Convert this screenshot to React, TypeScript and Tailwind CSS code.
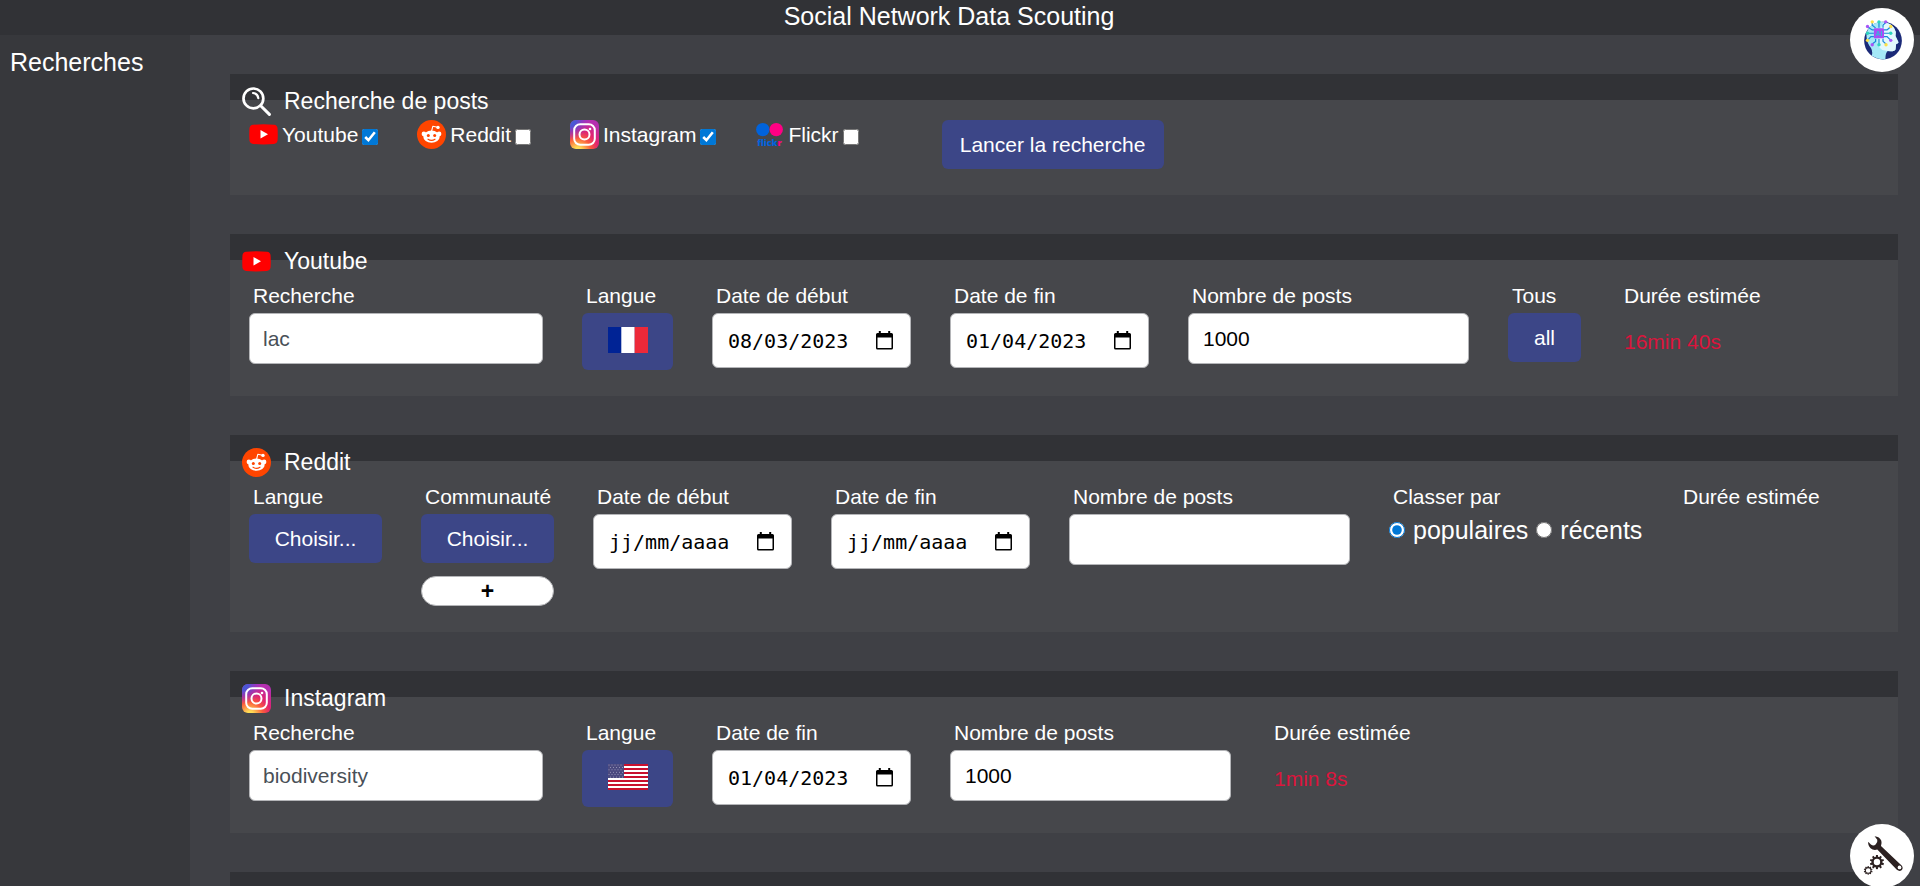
import { useId, type ReactNode } from "react";

const fieldBox = "rounded-md border border-[#b4b5b8] bg-white";
const blueButton =
  "flex h-[49px] cursor-pointer items-center justify-center rounded-md bg-[#3c4687] text-[21px] text-white hover:bg-[#47529b]";

function YoutubeIcon() {
  return (
    <svg viewBox="0 0 29 29" className="size-[29px] shrink-0" aria-hidden="true">
      <path fill="#f00" d="M4 4.7Q14.500 4 25 4.700Q28 5 28.500 8Q29 14.500 28.500 21Q28 23.600 25 24Q14.500 24.800 4 24Q1 23.600 .5 21Q0 14.500 .5 8Q1 5 4 4.700Z" />
      <path fill="#fff" d="M11.500 10v8.600l7.500-4.300Z" />
    </svg>
  );
}

function RedditIcon() {
  return (
    <svg viewBox="0 0 29 29" className="size-[29px] shrink-0" aria-hidden="true">
      <circle cx="14.500" cy="14.500" r="14.500" fill="#ff4500" />
      <path d="M14.500 11.500 15.800 6.300 20.500 7.300" fill="none" stroke="#fff" strokeWidth="1.100" strokeLinejoin="round" />
      <circle cx="21" cy="7.400" r="1.700" fill="#fff" />
      <circle cx="6.900" cy="13.900" r="2.300" fill="#fff" />
      <circle cx="22.100" cy="13.900" r="2.300" fill="#fff" />
      <ellipse cx="14.500" cy="16.700" rx="8.200" ry="6.100" fill="#fff" />
      <circle cx="11.300" cy="15.400" r="1.500" fill="#ff4500" />
      <circle cx="17.700" cy="15.400" r="1.500" fill="#ff4500" />
      <path d="M11 19.200Q14.500 21.500 18 19.200" fill="none" stroke="#ff4500" strokeWidth="1.100" strokeLinecap="round" />
    </svg>
  );
}

function InstagramIcon() {
  const id = useId();
  return (
    <svg viewBox="0 0 29 29" className="size-[29px] shrink-0" aria-hidden="true">
      <defs>
        <radialGradient id={`${id}a`} cx="0.270" cy="1.080" r="1.100">
          <stop offset="0" stopColor="#fd5" />
          <stop offset="0.120" stopColor="#fd5" />
          <stop offset="0.420" stopColor="#fb5a3c" />
          <stop offset="0.650" stopColor="#e1246f" />
          <stop offset="1" stopColor="#b52fb0" />
        </radialGradient>
        <radialGradient id={`${id}b`} cx="0" cy="0" r="0.700">
          <stop offset="0" stopColor="#3d63d8" />
          <stop offset="0.300" stopColor="#4d55d4" />
          <stop offset="1" stopColor="#8a30e0" stopOpacity="0" />
        </radialGradient>
      </defs>
      <rect width="29" height="29" rx="6" fill={`url(#${id}a)`} />
      <rect width="29" height="29" rx="6" fill={`url(#${id}b)`} />
      <rect x="4.200" y="4.200" width="20.600" height="20.600" rx="6" fill="none" stroke="#fff" strokeWidth="2" />
      <circle cx="14.500" cy="14.500" r="5" fill="none" stroke="#fff" strokeWidth="2" />
      <circle cx="20" cy="9" r="1.300" fill="#fff" />
    </svg>
  );
}

function FlickrIcon() {
  return (
    <svg viewBox="0 0 29 29" className="size-[29px] shrink-0" aria-hidden="true">
      <circle cx="7.800" cy="9.600" r="6.700" fill="#0063dc" />
      <circle cx="21.200" cy="9.600" r="6.700" fill="#ff0084" />
      <text x="14.500" y="26" textAnchor="middle" fontFamily="Open Sans, sans-serif" fontWeight="800" fontSize="9" fill="#0063dc">
        flick<tspan fill="#ff0084">r</tspan>
      </text>
    </svg>
  );
}

function SearchIcon() {
  return (
    <svg viewBox="0 0 29 29" className="size-[29px] shrink-0" aria-hidden="true" fill="none" stroke="#fff" strokeLinecap="round">
      <circle cx="11.400" cy="11.400" r="9.900" strokeWidth="2.700" />
      <path d="M18.700 18.700 27.400 27.400" strokeWidth="3" />
      <path d="M11 6Q15.800 6.500 16.300 11.200" strokeWidth="2.200" />
    </svg>
  );
}

function CalendarIcon() {
  return (
    <svg viewBox="0 0 17 19" className="h-[19px] w-[17px]" aria-hidden="true" fill="#000">
      <path fillRule="evenodd" d="M2.800 0h2v2h7.400V0h2v2H15.500Q17 2 17 3.500V17Q17 18.500 15.500 18.500H1.500Q0 18.500 0 17V3.500Q0 2 1.500 2H2.800ZM1.500 6.500V17H15.500V6.500Z" />
    </svg>
  );
}

function FranceFlag() {
  return (
    <svg viewBox="0 0 40 26" className="h-[26px] w-10" role="img" aria-label="Français">
      <rect width="14" height="26" fill="#002395" />
      <rect x="13.300" width="13.400" height="26" fill="#fff" />
      <rect x="26.700" width="13.300" height="26" fill="#ed2939" />
    </svg>
  );
}

function UsaFlag() {
  return (
    <svg viewBox="0 0 40 26" className="h-[26px] w-10" role="img" aria-label="English">
      <rect width="40" height="26" fill="#fff" />
      {[0, 4, 8, 12, 16, 20, 24].map((y) => (
        <rect key={y} y={y} width="40" height="2" fill="#c8102e" />
      ))}
      <rect width="16" height="14" fill="#4b4a80" />
      {[1, 3.400, 5.800, 8.200, 10.600, 13].map((y, row) =>
        [1, 4, 7, 10, 13].map((x) => <circle key={`${x}-${y}`} cx={x + (row % 2) * 1.500} cy={y} r="0.500" fill="#a9a8c4" />),
      )}
    </svg>
  );
}

function BrainIcon() {
  const dots: [number, number, string][] = [
    [276, 66, "#fde047"], [296, 66, "#2dd4bf"], [316, 66, "#a855f7"], [262, 80, "#a855f7"], [331, 80, "#fde047"],
    [262, 100, "#2dd4bf"], [331, 100, "#2dd4bf"], [262, 121, "#fde047"], [331, 121, "#a855f7"],
    [276, 134, "#a855f7"], [296, 134, "#2dd4bf"], [317, 134, "#fde047"],
  ];
  return (
    <svg viewBox="210 25 190 190" className="size-16" aria-hidden="true">
      <circle cx="308" cy="122" r="56" fill="#1b2a78" />
      <path fill="#a5e8f7" d="M260 96Q270 70 300 66Q338 66 346 96L345 108L354 127Q354 131 347 132L345 148Q343 155 322 153Q315 158 315 178Q290 178 275 167Q279 150 268 138Q256 118 260 96Z" />
      <path fill="#e3f8fd" d="M308 68Q340 70 346 96L345 108L354 127Q354 131 347 132L345 148Q343 155 322 153L306 150Q290 140 292 118Z" />
      <g stroke="#1687d9" strokeWidth="3.500" fill="none">
        <path d="M276 68V76L286 84M296 68V84M316 68L308 76V84M264 82L276 90H281M264 100H281M264 119L272 110H281M276 132L286 124V116M296 132V116M317 132L308 124V116M329 82L320 90H311M329 100H311M329 119L320 110H311" />
      </g>
      <rect x="281" y="85" width="30" height="30" rx="2" fill="#a94df5" />
      <text x="296" y="107" textAnchor="middle" fontFamily="Liberation Sans, sans-serif" fontWeight="700" fontSize="20" fill="#35b6dd">AI</text>
      {dots.map(([x, y, fill]) => (
        <circle key={`${x}-${y}`} cx={x} cy={y} r="5" fill={fill} />
      ))}
    </svg>
  );
}

function ToolsIcon() {
  const teeth = [0, 36, 72, 108, 144, 180, 216, 252, 288, 324];
  return (
    <svg viewBox="210 131 190 190" className="size-16" aria-hidden="true">
      <path
        fill="#2b2020"
        d="M283 167Q298 168 303 181Q305 188 302 196L364 255Q369 263 363 268Q357 273 349 267L291 207Q279 210 271 203Q263 196 264 184L272 192Q280 197 286 192Q293 186 291 178Z"
      />
      <circle cx="357" cy="260" r="5.500" fill="#fff" />
      <g stroke="#2b2020" fill="none">
        <circle cx="290" cy="244" r="13" strokeWidth="7" />
        {teeth.map((a) => (
          <path key={a} d="M290 230V223" strokeWidth="6" transform={`rotate(${a} 290 244)`} />
        ))}
        <circle cx="264" cy="269" r="8.500" strokeWidth="3" />
        {teeth.map((a) => (
          <path key={a} d="M264 260V256" strokeWidth="3.500" transform={`rotate(${a} 264 269)`} />
        ))}
      </g>
    </svg>
  );
}

function Panel({ icon, title, children }: { icon?: ReactNode; title?: string; children?: ReactNode }) {
  return (
    <section className="border-t-[26px] border-[#313236] bg-[#46474b] pb-[26px]">
      <h2 className="-mt-[18px] flex h-[38px] items-center gap-[13px] pl-3 text-[23px] text-white">
        {icon}
        {title}
      </h2>
      <div className="flex flex-wrap items-start gap-x-[39px] px-[19px]">{children}</div>
    </section>
  );
}

function Field({ label, htmlFor, children }: { label: string; htmlFor?: string; children?: ReactNode }) {
  const Tag = htmlFor ? "label" : "div";
  return (
    <div>
      <Tag {...(htmlFor ? { htmlFor } : {})} className="block h-[33px] pl-1 text-[21px] leading-8 text-white">
        {label}
      </Tag>
      {children}
    </div>
  );
}

function SearchField({ value }: { value: string }) {
  const id = useId();
  return (
    <Field label="Recherche" htmlFor={id}>
      <input id={id} type="text" defaultValue={value} className={`${fieldBox} block h-[51px] w-[294px] px-[13px] text-[21px] text-[#495057]`} />
    </Field>
  );
}

function DateField({ label, value }: { label: string; value?: string }) {
  const id = useId();
  return (
    <Field label={label} htmlFor={id}>
      <div className={`${fieldBox} flex h-[55px] w-[199px] items-center pl-[15px] pr-[17px]`}>
        <input
          id={id}
          type="text"
          inputMode="numeric"
          defaultValue={value}
          placeholder="jj/mm/aaaa"
          className="w-full min-w-0 flex-1 bg-transparent font-['DejaVu_Sans_Mono',monospace] text-[20px] text-black outline-none placeholder:text-black"
        />
        <button type="button" aria-label={`Calendrier, ${label}`} className="cursor-pointer">
          <CalendarIcon />
        </button>
      </div>
    </Field>
  );
}

function CountField({ value }: { value?: string }) {
  const id = useId();
  return (
    <Field label="Nombre de posts" htmlFor={id}>
      <input id={id} type="text" inputMode="numeric" defaultValue={value} className={`${fieldBox} block h-[51px] w-[281px] px-[14px] text-[21px] text-black`} />
    </Field>
  );
}

function LanguageField({ children }: { children: ReactNode }) {
  const id = useId();
  return (
    <Field label="Langue" htmlFor={id}>
      <button id={id} type="button" className="flex h-[57px] w-[91px] cursor-pointer items-center justify-center rounded-md bg-[#3c4687] pb-1 hover:bg-[#47529b]">
        {children}
      </button>
    </Field>
  );
}

function Duration({ value }: { value?: string }) {
  return (
    <Field label="Durée estimée">
      {value && <p className="pl-1 text-[21px] leading-[57px] text-[#dc143c]">{value}</p>}
    </Field>
  );
}

function Source({ icon, name, checked }: { icon: ReactNode; name: string; checked?: boolean }) {
  return (
    <label className="flex h-[29px] items-center gap-1 text-[21px] text-white">
      {icon}
      {name}
      <input type="checkbox" defaultChecked={checked} className="mt-1 size-4 accent-[#0078d7]" />
    </label>
  );
}

function SortOption({ name, checked }: { name: string; checked?: boolean }) {
  return (
    <label className="flex items-center gap-2 text-[25px] leading-8 text-white">
      <input type="radio" name="sort" defaultChecked={checked} className="size-4 accent-[#0078d7]" />
      {name}
    </label>
  );
}

export default function App() {
  return (
    <div className="flex h-screen flex-col overflow-hidden bg-[#3f4045] font-['Liberation_Sans',Arial,sans-serif]">
      <header className="flex h-[35px] shrink-0 items-center justify-center bg-[#313236] pb-[3px] pr-[22px]">
        <h1 className="text-[25px] leading-none text-white">Social Network Data Scouting</h1>
      </header>
      <div className="flex min-h-0 flex-1">
        <aside className="w-[190px] shrink-0 bg-[#37383c] px-[10px] pt-[11px]">
          <a href="#recherches" className="text-[25px] leading-8 text-white">Recherches</a>
        </aside>
        <main id="recherches" className="flex min-w-0 flex-1 flex-col gap-[39px] overflow-y-auto pt-[39px] pr-[22px] pl-10 [scrollbar-width:none] [&>section]:shrink-0">
          <Panel icon={<SearchIcon />} title="Recherche de posts">
            <Source icon={<YoutubeIcon />} name="Youtube" checked />
            <Source icon={<RedditIcon />} name="Reddit" />
            <Source icon={<InstagramIcon />} name="Instagram" checked />
            <Source icon={<FlickrIcon />} name="Flickr" />
            <button type="button" className={`${blueButton} ml-11 w-[222px]`}>Lancer la recherche</button>
          </Panel>

          <Panel icon={<YoutubeIcon />} title="Youtube">
            <SearchField value="lac" />
            <LanguageField><FranceFlag /></LanguageField>
            <DateField label="Date de début" value="08/03/2023" />
            <DateField label="Date de fin" value="01/04/2023" />
            <CountField value="1000" />
            <Field label="Tous" htmlFor="all-posts">
              <button id="all-posts" type="button" className={`${blueButton} w-[73px]`}>all</button>
            </Field>
            <Duration value="16min 40s" />
          </Panel>

          <Panel icon={<RedditIcon />} title="Reddit">
            <Field label="Langue" htmlFor="reddit-language">
              <button id="reddit-language" type="button" className={`${blueButton} w-[133px]`}>Choisir...</button>
            </Field>
            <Field label="Communauté" htmlFor="reddit-community">
              <button id="reddit-community" type="button" className={`${blueButton} w-[133px]`}>Choisir...</button>
              <button type="button" className="mt-[13px] flex h-[30px] w-[133px] cursor-pointer items-center justify-center rounded-full border border-[#b4b5b8] bg-white text-[23px] font-bold text-black">
                +
              </button>
            </Field>
            <DateField label="Date de début" />
            <DateField label="Date de fin" />
            <CountField />
            <Field label="Classer par">
              <div role="radiogroup" aria-label="Classer par" className="flex w-[251px] gap-2">
                <SortOption name="populaires" checked />
                <SortOption name="récents" />
              </div>
            </Field>
            <Duration />
          </Panel>

          <Panel icon={<InstagramIcon />} title="Instagram">
            <SearchField value="biodiversity" />
            <LanguageField><UsaFlag /></LanguageField>
            <DateField label="Date de fin" value="01/04/2023" />
            <CountField value="1000" />
            <Duration value="1min 8s" />
          </Panel>

          <Panel />
        </main>
      </div>
      <button type="button" aria-label="Intelligence artificielle" className="fixed top-2 right-1.5 cursor-pointer rounded-full bg-white">
        <BrainIcon />
      </button>
      <button type="button" aria-label="Outils" className="fixed right-1.5 -bottom-0.5 cursor-pointer rounded-full bg-white">
        <ToolsIcon />
      </button>
    </div>
  );
}
